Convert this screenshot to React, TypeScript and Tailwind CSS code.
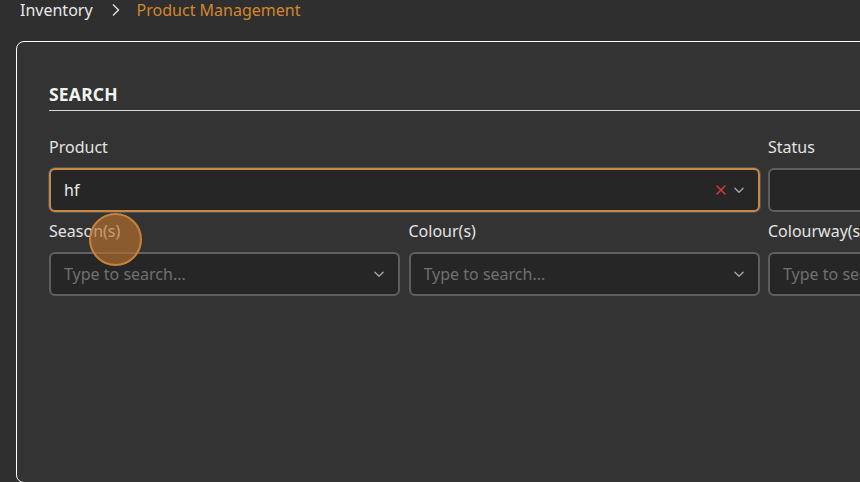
import React from 'react'

const font = { fontFamily: '"Noto Sans", "Open Sans", sans-serif' }

const Chevron = () => (
  <svg width="14" height="14" viewBox="0 0 24 24" fill="none" stroke="#a3a3a3" strokeWidth="2.4" strokeLinecap="round" strokeLinejoin="round">
    <path d="M5 9l7 7 7-7" />
  </svg>
)

const Cross = () => (
  <svg width="12" height="12" viewBox="0 0 24 24" fill="none" stroke="#d83a3a" strokeWidth="3" strokeLinecap="round">
    <path d="M4 4l16 16M20 4L4 20" />
  </svg>
)

interface SelectProps {
  value?: string
  placeholder?: string
  focused?: boolean
  clear?: boolean
  chevron?: boolean
}

const SelectBox = ({ value, placeholder, focused, clear, chevron = true }: SelectProps) => (
  <div
    className={`h-[44px] rounded-[6px] bg-[#262626] flex items-center pl-[13px] pr-[12px] ${
      focused ? 'border-2 border-[#c9893d] ring-1 ring-[#4b5060]' : 'border-2 border-[#5d5f63]'
    }`}
  >
    <div className={`flex-1 whitespace-nowrap overflow-hidden text-[16px] ${value ? 'text-[#ececec]' : 'text-[#707070]'}`}>
      {value || placeholder}
    </div>
    {clear && (
      <span className="mr-[5px] flex items-center">
        <Cross />
      </span>
    )}
    {chevron && <Chevron />}
  </div>
)

const Label = ({ children }: { children: React.ReactNode }) => (
  <div className="text-[16px] text-[#e4e4e4] leading-[20px] h-[20px] mb-[11px] whitespace-nowrap">{children}</div>
)

export default function App() {
  return (
    <div className="w-[860px] h-[482px] overflow-hidden bg-[#2f2f2f] relative" style={font}>
      <div className="flex items-center h-[19px] pl-[20px] text-[16px]">
        <span className="text-[#e8e8e8]">Inventory</span>
        <svg className="ml-[18px] mr-[16px]" width="10" height="14" viewBox="0 0 10 14" fill="none" stroke="#e0e0e0" strokeWidth="1.4">
          <path d="M2 1.5l5.5 5.5L2 12.5" />
        </svg>
        <span className="text-[#d4862c]">Product Management</span>
      </div>

      <div className="ml-[16px] mt-[22px] w-[1200px] h-[442px] rounded-[8px] border border-white bg-[#333333] pl-[32px] pt-[42px]">
        <div className="text-[17.5px] font-bold text-[#f2f2f2] tracking-[0.2px] leading-[20px]">SEARCH</div>
        <div className="mt-[6px] h-[1px] bg-[#d8d8d8]" />

        <div className="mt-[26px] grid grid-cols-[351px_351px_351px] gap-x-[8.5px] gap-y-[9px]">
          <div className="col-span-2">
            <Label>Product</Label>
            <SelectBox value="hf" focused clear />
          </div>
          <div>
            <Label>Status</Label>
            <SelectBox chevron={false} />
          </div>
          <div>
            <Label>Season(s)</Label>
            <SelectBox placeholder="Type to search..." />
          </div>
          <div>
            <Label>Colour(s)</Label>
            <SelectBox placeholder="Type to search..." />
          </div>
          <div>
            <Label>Colourway(s)</Label>
            <SelectBox placeholder="Type to search..." />
          </div>
        </div>
      </div>

      <div className="absolute left-[89px] top-[213px] w-[53px] h-[53px] rounded-full border-2 border-[#c7833a] bg-[#b8722e]/65" />
    </div>
  )
}
